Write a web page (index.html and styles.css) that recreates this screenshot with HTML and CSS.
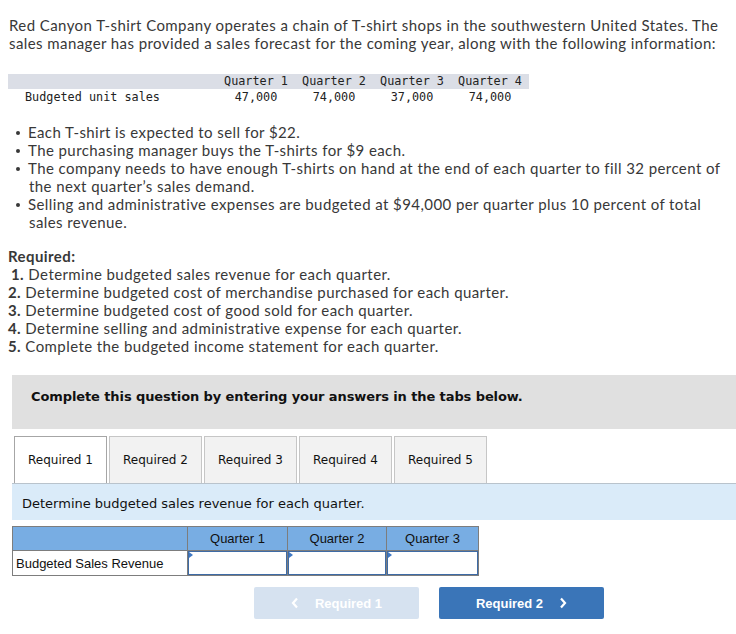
FILE: index.html
```html
<!DOCTYPE html>
<html>
<head>
<meta charset="utf-8">
<link rel="stylesheet" href="styles.css">
</head>
<body>
<div class="page">
  <p class="intro">Red Canyon T-shirt Company operates a chain of T-shirt shops in the southwestern United States. The sales manager has provided a sales forecast for the coming year, along with the following information:</p>

  <div class="units">
    <div class="units-row units-head">
      <span class="units-label"></span>
      <span class="units-cell">Quarter 1</span>
      <span class="units-cell">Quarter 2</span>
      <span class="units-cell">Quarter 3</span>
      <span class="units-cell">Quarter 4</span>
    </div>
    <div class="units-row">
      <span class="units-label">Budgeted unit sales</span>
      <span class="units-cell">47,000</span>
      <span class="units-cell">74,000</span>
      <span class="units-cell">37,000</span>
      <span class="units-cell">74,000</span>
    </div>
  </div>

  <ul class="facts">
    <li>Each T-shirt is expected to sell for $22.</li>
    <li>The purchasing manager buys the T-shirts for $9 each.</li>
    <li>The company needs to have enough T-shirts on hand at the end of each quarter to fill 32 percent of the next quarter’s sales demand.</li>
    <li>Selling and administrative expenses are budgeted at $94,000 per quarter plus 10 percent of total sales revenue.</li>
  </ul>

  <div class="required">
    <div class="req-title">Required:</div>
    <div class="req-item first"><b>1.</b> Determine budgeted sales revenue for each quarter.</div>
    <div class="req-item"><b>2.</b> Determine budgeted cost of merchandise purchased for each quarter.</div>
    <div class="req-item"><b>3.</b> Determine budgeted cost of good sold for each quarter.</div>
    <div class="req-item"><b>4.</b> Determine selling and administrative expense for each quarter.</div>
    <div class="req-item"><b>5.</b> Complete the budgeted income statement for each quarter.</div>
  </div>
</div>

<div class="question">
  <div class="banner">Complete this question by entering your answers in the tabs below.</div>
  <div class="tabs">
    <div class="tab active">Required 1</div>
    <div class="tab">Required 2</div>
    <div class="tab">Required 3</div>
    <div class="tab">Required 4</div>
    <div class="tab">Required 5</div>
  </div>
  <div class="panel-note">Determine budgeted sales revenue for each quarter.</div>

  <table class="answer">
    <tr class="answer-head">
      <th class="c0"></th>
      <th class="c1">Quarter 1</th>
      <th class="c2">Quarter 2</th>
      <th class="c3">Quarter 3</th>
    </tr>
    <tr>
      <td class="label">Budgeted Sales Revenue</td>
      <td class="input-cell"><div class="input"></div></td>
      <td class="input-cell"><div class="input"></div></td>
      <td class="input-cell"><div class="input"></div></td>
    </tr>
  </table>

  <div class="nav">
    <div class="btn disabled">
      <svg class="chev" width="8" height="12" viewBox="0 0 8 12"><path d="M6 1.5 L2 6 L6 10.5" fill="none" stroke="#fff" stroke-width="2.2"/></svg>
      <span>Required 1</span>
    </div>
    <div class="btn primary">
      <span>Required 2</span>
      <svg class="chev" width="8" height="12" viewBox="0 0 8 12"><path d="M2 1.5 L6 6 L2 10.5" fill="none" stroke="#fff" stroke-width="2.2"/></svg>
    </div>
  </div>
</div>
</body>
</html>
```

FILE: styles.css
```css
html, body {
  margin: 0;
  padding: 0;
  background: #fff;
}

.page {
  padding: 16px 8px 0 8px;
  font-family: "Lato", "Open Sans", sans-serif;
  font-size: 15px;
  letter-spacing: 0.42px;
  line-height: 18px;
  color: #383838;
}

.intro {
  margin: 0 0 22px 0;
  padding-left: 1px;
}

.units {
  width: 521px;
  font-family: "DejaVu Sans Mono", monospace;
  font-size: 11.8px;
  letter-spacing: 0;
  color: #222;
}

.units-row {
  display: flex;
  height: 16px;
  line-height: 16px;
}

.units-head {
  background: #dbdee6;
  height: 15px;
  line-height: 15px;
}

.units-label {
  width: 192px;
  padding-left: 17px;
  white-space: pre;
}

.units-cell {
  width: 78px;
  text-align: center;
}

.facts {
  margin: 18px 0 0 0;
  padding: 0 0 0 21px;
  list-style: none;
}

.facts li::before {
  content: "";
  display: inline-block;
  width: 4px;
  height: 4px;
  border-radius: 50%;
  background: #383838;
  margin: 0 8px 3px -13px;
  vertical-align: middle;
}

.required {
  margin-top: 16px;
}

.req-title {
  font-weight: bold;
}

.req-item b {
  font-weight: bold;
}

.req-item.first {
  padding-left: 3px;
}

.question {
  margin: 20px 0 0 12px;
}

.banner {
  background: #e0e0e0;
  height: 54px;
  box-sizing: border-box;
  padding: 13px 0 0 19px;
  font-family: "DejaVu Sans", sans-serif;
  font-weight: bold;
  font-size: 13px;
  letter-spacing: -0.1px;
  line-height: 18px;
  color: #111;
}

.tabs {
  display: flex;
  gap: 2px;
  margin: 7px 0 0 2px;
}

.tab {
  width: 91px;
  height: 46px;
  box-sizing: content-box;
  border: 1px solid #c6c6c6;
  border-bottom: none;
  background: #f2f2f2;
  font-family: "DejaVu Sans", sans-serif;
  font-size: 12px;
  line-height: 46px;
  text-align: center;
  color: #111;
}

.tab.active {
  background: #fff;
  border-color: #a6a6a6;
}

.panel-note {
  background: #daebf9;
  border-top: 1px solid #b9c3cc;
  height: 36px;
  box-sizing: content-box;
  padding-left: 10px;
  font-family: "DejaVu Sans", sans-serif;
  font-size: 13px;
  line-height: 40px;
  color: #111;
}

.answer {
  margin-top: 6px;
  border-collapse: collapse;
  font-family: "Liberation Sans", Arial, sans-serif;
  font-size: 13px;
  color: #111;
}

.answer th,
.answer td {
  border: 1px solid #7d7d7d;
  padding: 0;
}

.answer-head th {
  background: #78ade3;
  height: 23px;
  font-weight: normal;
  text-align: center;
}

.c0 { width: 174px; }
.c1 { width: 99px; }
.c2 { width: 98px; }
.c3 { width: 91px; }

.answer td {
  height: 24px;
}

.answer td.label {
  padding-left: 3px;
}

.input-cell {
  position: relative;
}

.input {
  height: 22px;
  border: 1px solid #3e6ba6;
  background: #fff;
}

.input-cell::before {
  content: "";
  position: absolute;
  left: 1px;
  top: 1px;
  border-top: 3px solid transparent;
  border-bottom: 3px solid transparent;
  border-left: 4px solid #3e78c4;
}

.nav {
  display: flex;
  gap: 20px;
  margin: 11px 0 0 242px;
}

.btn {
  width: 165px;
  height: 32px;
  border-radius: 2px;
  display: flex;
  align-items: center;
  justify-content: center;
  gap: 16px;
  font-family: "Liberation Sans", Arial, sans-serif;
  font-weight: bold;
  font-size: 13px;
  color: #fff;
}

.btn.disabled {
  background: #d6e2f0;
}

.btn.primary {
  background: #3a75b8;
}

.chev {
  display: block;
}
```
